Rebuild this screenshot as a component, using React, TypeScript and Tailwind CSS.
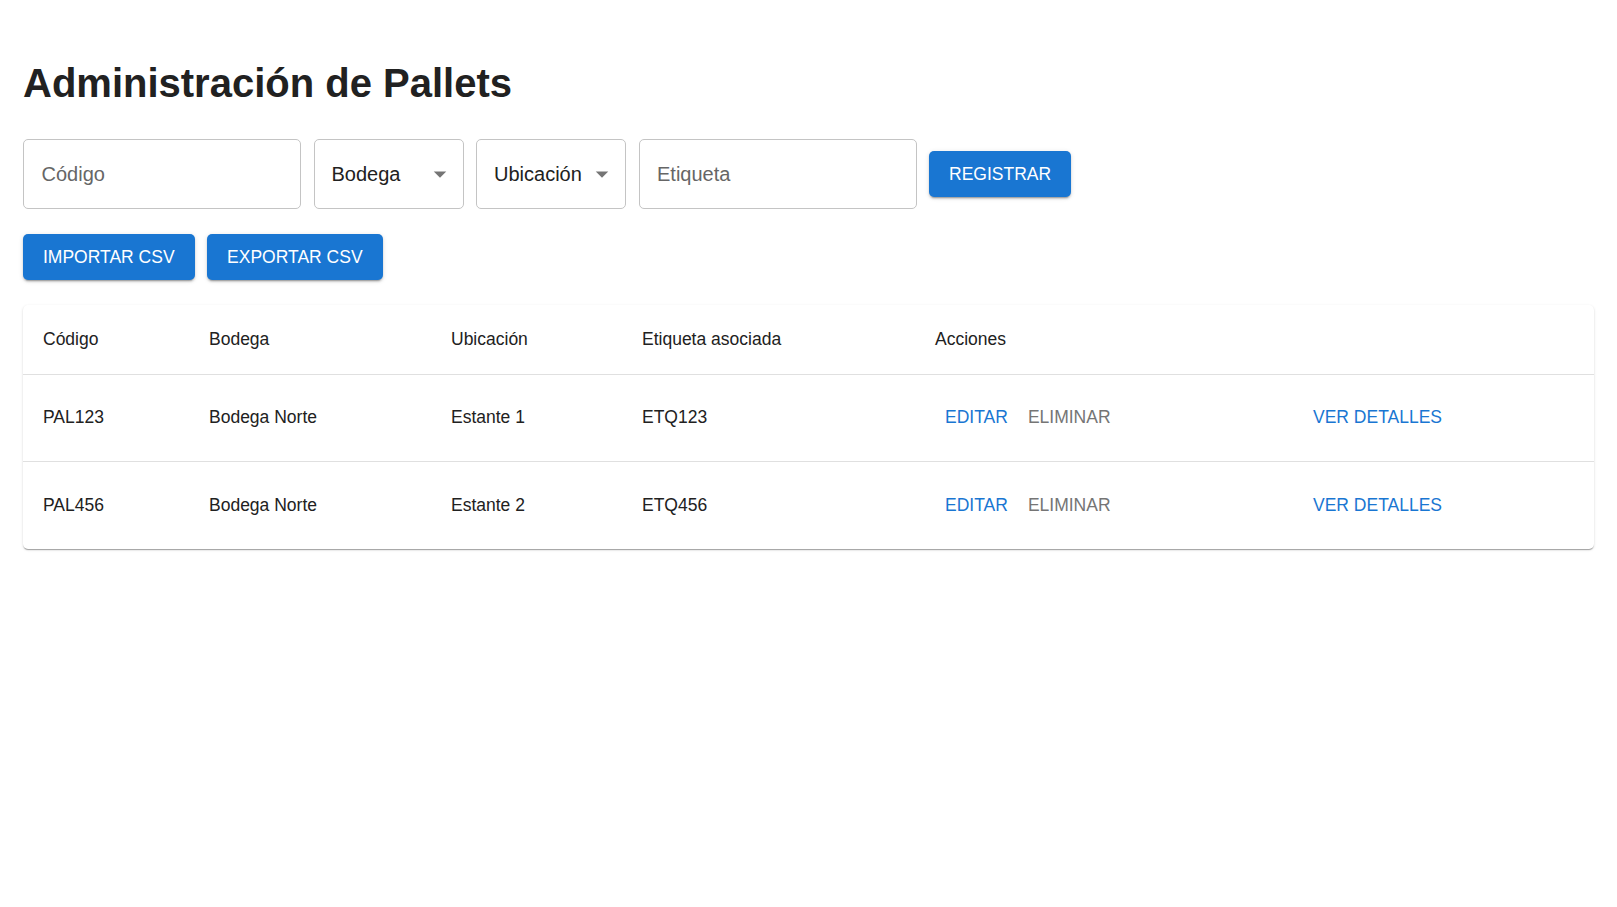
import React from "react";

const font = { fontFamily: '"Liberation Sans", Arial, Helvetica, sans-serif' };

function Arrow() {
  return (
    <svg width="30" height="30" viewBox="0 0 24 24" className="shrink-0">
      <path d="M7 10l5 5 5-5z" fill="rgba(0,0,0,0.54)" />
    </svg>
  );
}

function TextField({ label }: { label: string }) {
  return (
    <div className="w-[278px] h-[70px] border border-[#c4c4c4] rounded-[5px] flex items-center px-[17.5px] shrink-0">
      <span className="text-[20px] text-[#666666] leading-none">{label}</span>
    </div>
  );
}

function SelectField({ label }: { label: string }) {
  return (
    <div className="w-[150px] h-[70px] border border-[#c4c4c4] rounded-[5px] flex items-center justify-between pl-[17px] pr-[8px] shrink-0">
      <span className="text-[20px] text-[#212121] leading-none">{label}</span>
      <Arrow />
    </div>
  );
}

function Contained({ children }: { children: React.ReactNode }) {
  return (
    <button className="h-[45.5px] px-[20px] rounded-[5px] bg-[#1976d2] text-white text-[17.5px] font-normal uppercase shadow-[0_3px_1px_-2px_rgba(0,0,0,0.2),0_2px_2px_0_rgba(0,0,0,0.14),0_1px_5px_0_rgba(0,0,0,0.12)] shrink-0">
      {children}
    </button>
  );
}

function TextBtn({ children, grey }: { children: React.ReactNode; grey?: boolean }) {
  return (
    <button
      className={`h-[45.5px] px-[10px] min-w-[80px] text-[17.5px] font-normal uppercase text-left ${grey ? "text-[#757575]" : "text-[#1976d2]"}`}
    >
      {children}
    </button>
  );
}

const rows = [
  { c: "PAL123", b: "Bodega Norte", u: "Estante 1", e: "ETQ123" },
  { c: "PAL456", b: "Bodega Norte", u: "Estante 2", e: "ETQ456" },
];

const cols = "grid grid-cols-[166px_242px_191px_293px_368px_1fr]";

export default function App() {
  return (
    <div style={font} className="min-h-[907px] bg-white px-[23px] pt-[59px] text-[#212121]">
      <h1 className="text-[40px] font-bold leading-[48px] mb-[32px] text-[#212121]">
        Administración de Pallets
      </h1>

      <div className="flex items-center gap-[12.5px]">
        <TextField label="Código" />
        <SelectField label="Bodega" />
        <SelectField label="Ubicación" />
        <TextField label="Etiqueta" />
        <Contained>Registrar</Contained>
      </div>

      <div className="flex items-center gap-[12.5px] mt-[25px]">
        <Contained>Importar CSV</Contained>
        <Contained>Exportar CSV</Contained>
      </div>

      <div className="mt-[25px] rounded-[5px] bg-white shadow-[0_2px_1px_-1px_rgba(0,0,0,0.2),0_1px_1px_0_rgba(0,0,0,0.14),0_1px_3px_0_rgba(0,0,0,0.12)]">
        <div className={`${cols} h-[70px] border-b border-[#e0e0e0] items-center text-[17.5px]`}>
          <div className="px-[20px]">Código</div>
          <div className="px-[20px]">Bodega</div>
          <div className="px-[20px]">Ubicación</div>
          <div className="px-[20px]">Etiqueta asociada</div>
          <div className="px-[20px]">Acciones</div>
          <div />
        </div>
        {rows.map((r, i) => (
          <div
            key={r.c}
            className={`${cols} h-[87px] items-center text-[17.5px] ${i < rows.length - 1 ? "border-b border-[#e0e0e0]" : ""}`}
          >
            <div className="px-[20px]">{r.c}</div>
            <div className="px-[20px]">{r.b}</div>
            <div className="px-[20px]">{r.u}</div>
            <div className="px-[20px]">{r.e}</div>
            <div className="px-[20px] flex items-center">
              <TextBtn>Editar</TextBtn>
              <TextBtn grey>Eliminar</TextBtn>
            </div>
            <div className="px-[20px] flex items-center">
              <TextBtn>Ver detalles</TextBtn>
            </div>
          </div>
        ))}
      </div>
    </div>
  );
}
